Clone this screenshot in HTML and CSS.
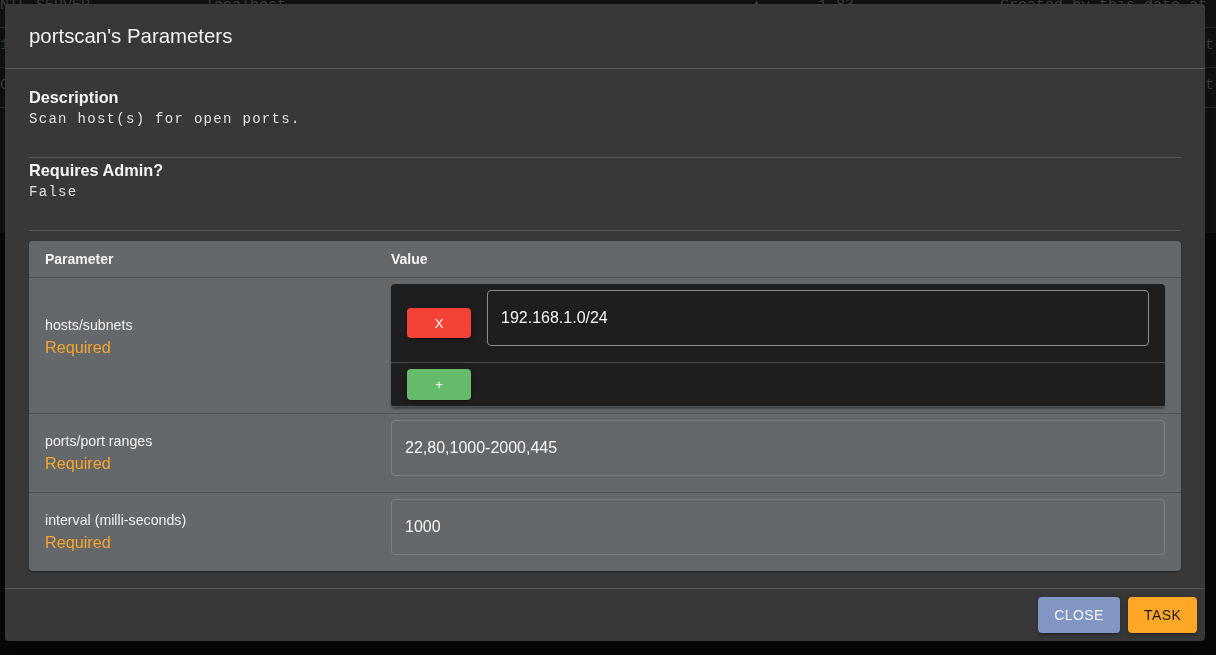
FILE: index.html
```html
<!DOCTYPE html>
<html>
<head>
<meta charset="utf-8">
<link rel="stylesheet" href="styles.css">
</head>
<body>
<div class="page">
  <div class="bg-row"><span class="c1">NTL_SERVER</span><span class="c2">localhost</span><span class="c3">&#9650;</span><span class="c4">1.83</span><span class="c5">Created by this date at</span></div>
  <div class="bg-row"><span class="c1">1</span><span class="c5b">at</span></div>
  <div class="bg-row"><span class="c1">C</span><span class="c5b">at</span></div>
  <div class="bg-rest"></div>
</div>

<div class="backdrop">
  <div class="modal">
    <div class="modal-header">portscan's Parameters</div>
    <div class="modal-content">
      <div class="section">
        <div class="section-title">Description</div>
        <div class="section-text">Scan host(s) for open ports.</div>
      </div>
      <div class="section">
        <div class="section-title">Requires Admin?</div>
        <div class="section-text">False</div>
      </div>
      <div class="card">
        <table class="params">
          <thead>
            <tr><th class="col-param">Parameter</th><th>Value</th></tr>
          </thead>
          <tbody>
            <tr>
              <td class="label-cell raised">
                <div class="pname">hosts/subnets</div>
                <div class="req">Required</div>
              </td>
              <td class="value-cell tight">
                <div class="array-box">
                  <table class="array">
                    <tr class="arow">
                      <td class="btn-cell"><button class="small red">X</button></td>
                      <td class="input-cell"><div class="input dark">192.168.1.0/24</div></td>
                    </tr>
                    <tr class="arow add">
                      <td class="btn-cell"><button class="small green">+</button></td>
                      <td></td>
                    </tr>
                  </table>
                </div>
              </td>
            </tr>
            <tr>
              <td class="label-cell">
                <div class="pname">ports/port ranges</div>
                <div class="req">Required</div>
              </td>
              <td class="value-cell"><div class="input">22,80,1000-2000,445</div></td>
            </tr>
            <tr class="last">
              <td class="label-cell">
                <div class="pname">interval (milli-seconds)</div>
                <div class="req">Required</div>
              </td>
              <td class="value-cell"><div class="input">1000</div></td>
            </tr>
          </tbody>
        </table>
      </div>
    </div>
    <div class="modal-footer">
      <button class="btn close">Close</button>
      <button class="btn task">Task</button>
    </div>
  </div>
</div>
</body>
</html>
```

FILE: styles.css
```css
* { box-sizing: border-box; }
html, body { margin: 0; padding: 0; }
body {
  background: #080808;
  font-family: "Liberation Sans", Arial, sans-serif;
  color: #fff;
  width: 1216px;
  height: 655px;
  overflow: hidden;
}

.page {
  margin-top: -12px;
  background: #111111;
  height: 245px;
  overflow: hidden;
}
.bg-row {
  position: relative;
  height: 40px;
  border-bottom: 1px solid #262626;
  font-family: "Liberation Mono", monospace;
  font-size: 15px;
  color: #3c3c3c;
  overflow: hidden;
}
.bg-rest { height: 122px; }
.bg-row span { position: absolute; top: 9px; white-space: nowrap; }
.bg-row .c1 { left: 0; }
.bg-row .c2 { left: 205px; }
.bg-row .c3 { left: 752px; }
.bg-row .c4 { left: 818px; }
.bg-row .c5 { left: 1000px; }
.bg-row .c5b { left: 1196px; }

.backdrop {
  position: fixed;
  inset: 0;
}
.modal {
  position: absolute;
  left: 5px;
  top: 4px;
  width: 1200px;
  height: 637px;
  background: #383838;
  border-radius: 4px;
  box-shadow: 0 11px 15px -7px rgba(0,0,0,.2), 0 24px 38px 3px rgba(0,0,0,.14);
  display: flex;
  flex-direction: column;
}
.modal-header {
  padding: 16px 24px;
  font-size: 20.4px;
  line-height: 32px;
  color: #f2f2f2;
  border-bottom: 1px solid #555;
}
.modal-content {
  padding: 16px 24px;
  flex: 1;
  border-bottom: 1px solid #555;
}
.section {
  padding-bottom: 28px;
  border-bottom: 1px solid #555;
}
.section-title {
  font-size: 16.3px;
  font-weight: 700;
  line-height: 24px;
  color: #f4f4f4;
}
.section-text {
  font-family: "Liberation Mono", "Courier New", monospace;
  font-size: 14px;
  letter-spacing: 1.3px;
  line-height: 20px;
  color: #e0e0e0;
}

.card {
  margin-top: 10px;
  background: #65686b;
  border-radius: 4px;
  box-shadow: 0 2px 1px -1px rgba(0,0,0,.2), 0 1px 1px 0 rgba(0,0,0,.14), 0 1px 3px 0 rgba(0,0,0,.12);
  overflow: hidden;
}
.params {
  width: 100%;
  border-collapse: collapse;
}
.params th {
  text-align: left;
  font-size: 14px;
  font-weight: 700;
  line-height: 20px;
  padding: 8px 16px 8px;
  color: #f4f4f4;
  border-bottom: 1px solid #505356;
}
.params .col-param { width: 346px; }
.params tbody > tr > td { border-bottom: 1px solid #505356; vertical-align: middle; }
.params tbody > tr.last > td { border-bottom: none; }
.label-cell { padding: 0 16px; }
.label-cell.raised { padding-bottom: 18px; }
.pname {
  font-size: 14.2px;
  line-height: 20px;
  color: #f0f0f0;
}
.req {
  font-size: 16.2px;
  line-height: 24px;
  color: #f7a52b;
}
.value-cell { padding: 6px 16px 6px 16px; }
.value-cell.tight { padding: 6px 16px; }
.value-cell > .input { margin-bottom: 10px; }

.input {
  height: 56px;
  border: 1px solid #85888b;
  border-radius: 4px;
  padding: 0 13px;
  display: flex;
  align-items: center;
  font-size: 16px;
  color: #f6f6f6;
}
.value-cell > .input { border-color: #7c7f82; }
.input.dark { border-color: #8c8c8c; }

.array-box {
  background: #1e1e1e;
  border-radius: 4px;
  box-shadow: 0 2px 2px rgba(0,0,0,.35);
}
.array {
  width: 100%;
  border-collapse: collapse;
}
.array .arow > td { vertical-align: middle; }
.array .arow:first-child > td { border-bottom: 1px solid #4a4a4a; }
.btn-cell { width: 96px; padding: 0 16px; }
.input-cell { padding: 6px 16px 16px 0; }
.arow.add > td { height: 44px; }

button { font-family: "Liberation Sans", Arial, sans-serif; border: none; cursor: pointer; }
.small {
  width: 64px;
  height: 31px;
  border-radius: 4px;
  font-size: 13px;
  color: #fff;
  display: flex;
  align-items: center;
  justify-content: center;
  box-shadow: 0 3px 1px -2px rgba(0,0,0,.2), 0 2px 2px 0 rgba(0,0,0,.14), 0 1px 5px 0 rgba(0,0,0,.12);
}
.small.red { background: #f44336; height: 30px; }
.small.green { background: #66bb6a; }

.modal-footer {
  padding: 8px;
  display: flex;
  justify-content: flex-end;
  gap: 8px;
}
.btn {
  height: 36px;
  padding: 0 16px;
  border-radius: 4px;
  font-size: 14px;
  font-weight: 400;
  letter-spacing: 0.4px;
  text-transform: uppercase;
  box-shadow: 0 3px 1px -2px rgba(0,0,0,.2), 0 2px 2px 0 rgba(0,0,0,.14), 0 1px 5px 0 rgba(0,0,0,.12);
}
.btn.close { background: #8196c3; color: #f4f6fb; width: 82px; }
.btn.task { background: #ffa726; color: #1c1c1c; width: 69px; }
```
